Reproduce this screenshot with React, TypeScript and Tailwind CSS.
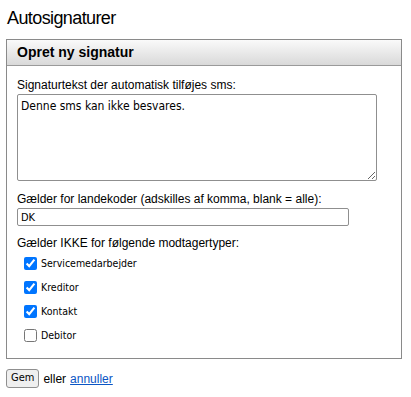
import React from "react"

const recipientTypes = [
  { label: "Servicemedarbejder", checked: true },
  { label: "Kreditor", checked: true },
  { label: "Kontakt", checked: true },
  { label: "Debitor", checked: false },
]

const tahoma = "font-['DejaVu_Sans_Condensed','Liberation_Sans',Tahoma,sans-serif]"

export default function App() {
  return (
    <div className="px-[6px] pt-[5px] bg-white text-black font-['Liberation_Sans',Arial,sans-serif]">
      <h1 className="text-[18px] leading-[26px] pl-[1px] tracking-[-0.6px]">Autosignaturer</h1>

      <div className="mt-[8px] w-[396px] border border-[#8a8a8a]">
        <div className="h-[26px] pl-[10px] flex items-center border-b border-[#9a9a9a] bg-gradient-to-b from-[#fafafa] to-[#d9d9d9]">
          <h2 className="text-[14px] font-bold">Opret ny signatur</h2>
        </div>

        <div className="px-[10px] pt-[10px] pb-[16px] text-[12px]">
          <label className="block leading-[18px]">Signaturtekst der automatisk tilføjes sms:</label>
          <textarea
            className={`block w-[360px] h-[87px] border border-[#8f8f8f] rounded-[2px] px-[3px] py-[2px] text-[12px] ${tahoma} resize`}
            defaultValue="Denne sms kan ikke besvares."
          />

          <label className="block mt-[9px] leading-[18px]">Gælder for landekoder (adskilles af komma, blank = alle):</label>
          <input
            type="text"
            className={`block w-[332px] h-[18px] border border-[#8f8f8f] rounded-[2px] px-[3px] text-[11px] ${tahoma}`}
            defaultValue="DK"
          />

          <label className="block mt-[8px] leading-[18px]">Gælder IKKE for følgende modtagertyper:</label>
          <div className="flex flex-col gap-[11px] mt-[5px] pl-[7px]">
            {recipientTypes.map((item) => (
              <label key={item.label} className={`flex items-center h-[13px] text-[10.5px] ${tahoma}`}>
                <input type="checkbox" defaultChecked={item.checked} className="w-[13px] h-[13px] m-0 mr-[4px]" />
                {item.label}
              </label>
            ))}
          </div>
        </div>
      </div>

      <div className="mt-[10px] flex items-center text-[12px]">
        <button className={`h-[19px] px-[4px] border border-[#8f8f8f] rounded-[3px] bg-[#efefef] text-[11px] ${tahoma}`}>
          Gem
        </button>
        <span className="ml-[4px]">eller</span>
        <a href="#" className="ml-[4px] text-[#0b55c4] underline">annuller</a>
      </div>
    </div>
  )
}
